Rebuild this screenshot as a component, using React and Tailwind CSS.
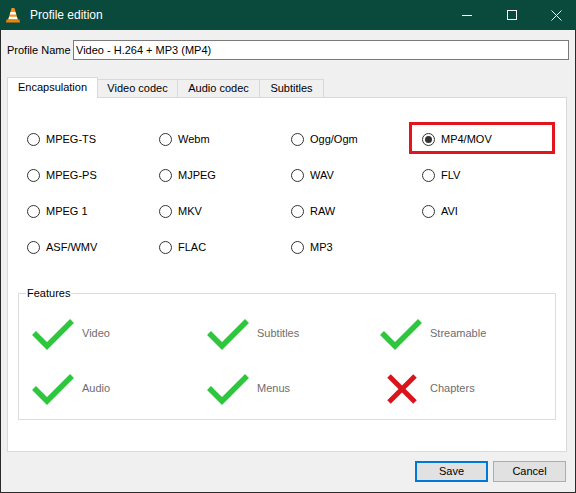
import React from "react";

function VlcIcon() {
  return (
    <svg width="16" height="17" viewBox="0 0 16 17" className="ml-[5px] shrink-0">
      <path d="M6.6 1 L9.4 1 L13 13 L3 13 Z" fill="#f7941d" />
      <path d="M5.6 5 L10.4 5 L11.2 7.6 L4.8 7.6 Z" fill="#ffffff" />
      <path d="M4.2 9.8 L11.8 9.8 L12.5 12 L3.5 12 Z" fill="#ffffff" />
      <path d="M1.5 12.5 L14.5 12.5 L15 15.5 L1 15.5 Z" fill="#e8830d" />
    </svg>
  );
}

function Radio({ label, checked }) {
  return (
    <div className="flex items-center gap-[6px] h-[36px]">
      <span className="w-[13px] h-[13px] rounded-full border border-[#333333] bg-white flex items-center justify-center shrink-0">
        {checked && <span className="w-[7px] h-[7px] rounded-full bg-[#333333]" />}
      </span>
      <span>{label}</span>
    </div>
  );
}

function Check() {
  return (
    <svg width="44" height="32" viewBox="0 0 44 32" className="shrink-0">
      <polyline points="2,15 15,28 40,3" fill="none" stroke="#2ec63c" strokeWidth="5.5" strokeLinejoin="miter" />
    </svg>
  );
}

function Cross() {
  return (
    <svg width="44" height="32" viewBox="0 0 44 32" className="shrink-0">
      <line x1="9" y1="3" x2="35" y2="29" stroke="#d9141c" strokeWidth="5" />
      <line x1="35" y1="3" x2="9" y2="29" stroke="#d9141c" strokeWidth="5" />
    </svg>
  );
}

function Feature({ label, ok }) {
  return (
    <div className="flex items-center gap-[6px] h-[55px]">
      {ok ? <Check /> : <Cross />}
      <span className="text-[#6e6e6e]">{label}</span>
    </div>
  );
}

export default function App() {
  const rows = [
    ["MPEG-TS", "Webm", "Ogg/Ogm", "MP4/MOV"],
    ["MPEG-PS", "MJPEG", "WAV", "FLV"],
    ["MPEG 1", "MKV", "RAW", "AVI"],
    ["ASF/WMV", "FLAC", "MP3", null],
  ];
  return (
    <div className="w-[576px] h-[493px] flex flex-col bg-[#f0f0f0] overflow-hidden font-['Liberation_Sans',Arial,sans-serif] text-[11px] text-black">
      <div className="h-[30px] bg-[#0a4a3c] flex items-center shrink-0">
        <VlcIcon />
        <span className="ml-[9px] text-white text-[12px]">Profile edition</span>
        <div className="ml-auto mr-[-3px] flex h-full">
          <div className="w-[45px] h-full flex items-center justify-center">
            <span className="w-[10px] h-[1px] bg-white" />
          </div>
          <div className="w-[45px] h-full flex items-center justify-center">
            <span className="w-[10px] h-[10px] border border-white" />
          </div>
          <div className="w-[45px] h-full flex items-center justify-center">
            <svg width="11" height="11" viewBox="0 0 11 11">
              <line x1="0.5" y1="0.5" x2="10.5" y2="10.5" stroke="#ffffff" strokeWidth="1" />
              <line x1="10.5" y1="0.5" x2="0.5" y2="10.5" stroke="#ffffff" strokeWidth="1" />
            </svg>
          </div>
        </div>
      </div>
      <div className="flex-1 flex flex-col px-[6px] border-x border-b border-[#2a2a2a]">
        <div className="flex items-center mt-[10px] h-[20px]">
          <span>Profile Name</span>
          <div className="ml-auto w-[496px] h-[20px] border border-[#7a7a7a] bg-white pl-[2px] flex items-center">
            Video - H.264 + MP3 (MP4)
          </div>
        </div>
        <div className="flex items-end mt-[17px] h-[20px]">
          <div className="w-[91px] h-[21px] mb-[-1px] relative z-10 bg-white border-x border-t border-[#d9d9d9] flex items-center justify-center pb-[2px]">
            Encapsulation
          </div>
          <div className="w-[80px] h-[18px] bg-[#f0f0f0] border-t border-r border-[#d9d9d9] flex items-center justify-center">
            Video codec
          </div>
          <div className="w-[82px] h-[18px] bg-[#f0f0f0] border-t border-r border-[#d9d9d9] flex items-center justify-center">
            Audio codec
          </div>
          <div className="w-[64px] h-[18px] bg-[#f0f0f0] border-t border-r border-[#d9d9d9] flex items-center justify-center">
            Subtitles
          </div>
        </div>
        <div className="w-[560px] h-[355px] bg-white border border-[#d9d9d9] relative flex flex-col">
          <div className="grid grid-cols-[132px_132px_131px_132px] pl-[19px] pt-[23px]">
            {rows.flat().map((r, i) =>
              r ? <Radio key={i} label={r} checked={r === "MP4/MOV"} /> : <div key={i} />
            )}
          </div>
          <div className="absolute left-[401px] top-[24px] w-[146px] h-[32px] border-[3px] border-[#e3141c]" />
          <fieldset className="mx-[10px] mt-[22px] border border-[#dcdcdc] pt-[6px] pb-[3px] pl-[13px]">
            <legend className="ml-[-6px] px-[1px] leading-[13px]">Features</legend>
            <div className="grid grid-cols-[175px_173px_1fr]">
              <Feature label="Video" ok />
              <Feature label="Subtitles" ok />
              <Feature label="Streamable" ok />
              <Feature label="Audio" ok />
              <Feature label="Menus" ok />
              <Feature label="Chapters" />
            </div>
          </fieldset>
        </div>
        <div className="flex justify-end gap-[5px] mt-[9px] mr-[3px]">
          <div className="w-[73px] h-[21px] bg-[#e1e1e1] border-2 border-[#0078d7] flex items-center justify-center">
            Save
          </div>
          <div className="w-[73px] h-[21px] bg-[#e1e1e1] border border-[#adadad] flex items-center justify-center">
            Cancel
          </div>
        </div>
      </div>
    </div>
  );
}
